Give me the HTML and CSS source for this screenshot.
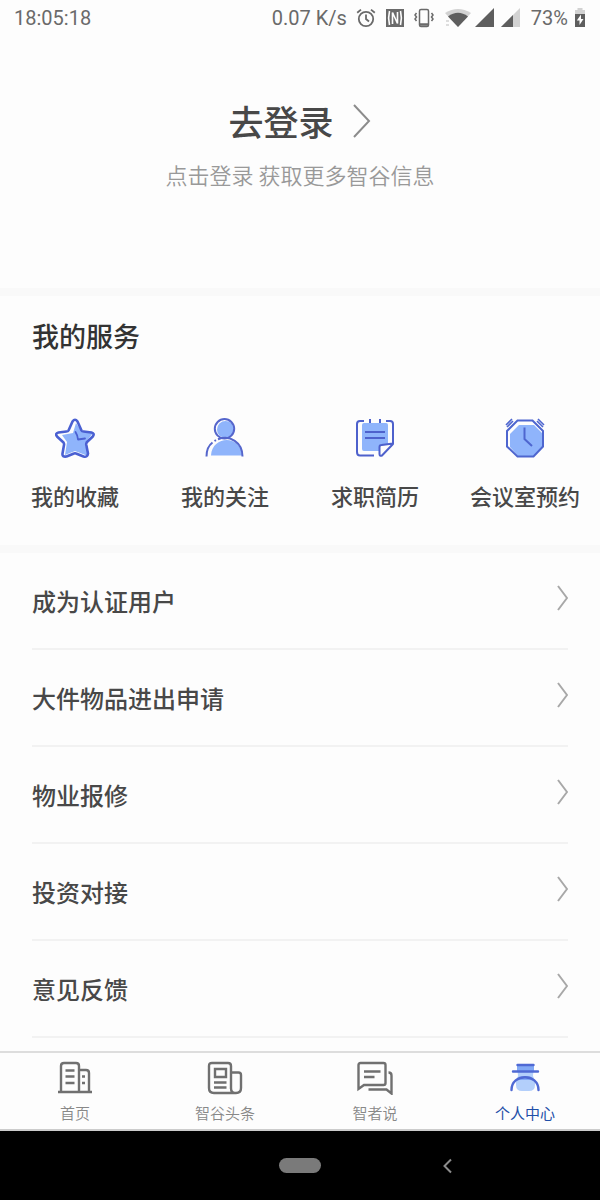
FILE: index.html
```
<!DOCTYPE html>
<html lang="zh-CN">
<head>
  <meta charset="UTF-8" />
  <meta name="viewport" content="width=device-width, initial-scale=1.0"/>
  <title>个人中心</title>
  <link rel="stylesheet" href="styles.css">
</head>
<body>
  <!-- Status bar -->
  <header class="status-bar">
    <span class="clock">18:05:18</span>
    <span class="speed">0.07 K/s</span>
    <div class="status-icons">
      <svg width="20" height="20" viewBox="0 0 20 20" fill="none" stroke="#6a6a6a" stroke-width="1.8">
        <circle cx="10" cy="11" r="7.2"/>
        <path d="M10 6.5V11l3 2.5M1.2 4.8L5 1.6M18.8 4.8L15 1.6"/>
      </svg>
      <svg width="20" height="20" viewBox="0 0 20 20">
        <path fill="#6a6a6a" d="M1 1h18v18H1z"/>
        <path fill="none" stroke="#fdfdfd" stroke-width="1.6" d="M4.5 17c-1-4-1-10 0-14M7.5 16V4.500l5 11V4M15.500 3c1 4 1 10 0 14"/>
      </svg>
      <svg width="20" height="20" viewBox="0 0 20 20" fill="none" stroke="#6a6a6a" stroke-width="1.5">
        <rect x="5.5" y="1.5" width="9" height="17" rx="1.5"/>
        <path d="M5.5 16.5h9" stroke-width="2.5"/>
        <path d="M2.5 5l-1.5 2 1.5 2-1.5 2 1.5 2M17.5 5l1.5 2-1.5 2 1.5 2-1.5 2"/>
      </svg>
      <svg class="wifi" width="26" height="20" viewBox="0 0 26 20">
        <path fill="#d2d2d2" d="M0 5Q13-3 26 5L13 19z"/>
        <path fill="#5e5e5e" d="M3 8.500Q13 1 23 8.500L13 19z"/>
        <path stroke="#d2d2d2" stroke-width="1.5" d="M1 13h3M1 17h3"/>
      </svg>
      <svg width="20" height="20" viewBox="0 0 20 20"><path fill="#5e5e5e" d="M0 19L19 0v19z"/></svg>
      <svg class="sim" width="20" height="20" viewBox="0 0 20 20">
        <path fill="#d2d2d2" d="M0 19L19 0v19z"/>
        <path fill="#5e5e5e" d="M0 19L12 7v12z"/>
      </svg>
    </div>
    <span class="percent">73%</span>
    <svg width="12" height="20" viewBox="0 0 12 20">
      <path fill="#d2d2d2" d="M3.5 0h5v2H11v6H1V2h2.5z"/>
      <path fill="#5e5e5e" d="M1 6h10v13H1z"/>
      <path fill="#fdfdfd" d="M7 6.5L2.8 12.5h2.700V17l4-6H7z"/>
    </svg>
  </header>

  <main>
    <section class="profile">
      <a class="login" href="#">
        去登录
        <svg width="20" height="36" viewBox="0 0 20 36" fill="none" stroke="#8c8c8c" stroke-width="2"><path d="M2 2l15 16L2 34"/></svg>
      </a>
      <p>点击登录 获取更多智谷信息</p>
    </section>

    <section class="services">
      <h2>我的服务</h2>
      <div class="service-grid">
        <a href="#">
          <svg width="40" height="40" viewBox="0 0 40 40" stroke-linejoin="round" stroke-linecap="round">
            <path fill="#8fb4fb" d="M21 5l6 9 11 1-8 10 3 13-13-5-10 4 2-13-5-7 11-2z"/>
            <path fill="none" stroke="#4a60d2" stroke-width="2.6" d="M17.5 3.5Q20 0 22.5 3.5L26.5 12.500Q27 13.500 28.500 13.500L36.500 14.500Q40 15.500 37.800 18.500L32 24Q31 25 31.300 27L33 35.500Q32.500 39.500 28.500 38.500L21 35.500Q20 35 19 35.500L11.500 38.500Q7 39.300 7.500 35.500L9 27Q9.300 25.500 8.500 24.500L2 18.500Q-.3 15.500 3.500 14.500L11.500 13.500Q13 13.500 13.500 12.500z"/>
            <path fill="none" stroke="#4a60d2" stroke-width="1.8" d="M20.500 14q2 3 2.500 7.500l7-1"/>
          </svg>
          我的收藏
        </a>
        <a href="#">
          <svg width="40" height="40" viewBox="0 0 40 40">
            <circle cx="20.5" cy="11.5" r="8.500" fill="#8fb4fb"/>
            <path fill="#8fb4fb" d="M6 37.500c1-20 30-21 31 0z"/>
            <g fill="none" stroke="#5566cc" stroke-width="2">
              <circle cx="19.5" cy="10.8" r="9.7"/>
              <path d="M1.500 38.500c0-6 2-11 6-14M9.500 23l1.500-.9M13 21.200c12-4.500 24.500 3 24.500 17.300"/>
            </g>
          </svg>
          我的关注
        </a>
        <a href="#">
          <svg width="40" height="40" viewBox="0 0 40 40">
            <path fill="#8fb4fb" d="M9 5h22q2 0 2 2v20l-8 1-1 5H9q-2 0-2-2V7q0-2 2-2z"/>
            <path fill="#fdfdfd" d="M25 38l1-10 12-2z"/>
            <g fill="none" stroke="#4e61cc" stroke-width="2" stroke-linejoin="round">
              <path d="M9 3H5Q2 3 2 6V34Q2 37.500 5 37.500H19M31 3h4Q38 3 38 6V26L27 37.500Q24.500 38.500 24.500 36V29Q24.500 27 26.500 27L38 25.500"/>
              <path d="M15 1v4M25 1v4M10 14h20M10 20h20"/>
            </g>
          </svg>
          求职简历
        </a>
        <a href="#">
          <svg width="40" height="40" viewBox="0 0 40 40">
            <path fill="#8fb4fb" d="M14 7h15l9 9v12l-9 10H13l-8-9V16z"/>
            <g fill="none" stroke="#4e66cf" stroke-width="2">
              <path d="M12.5 2.5h15L38 13v15.5L28.5 38.500H12.500L2 28.500V13z"/>
              <path d="M19.500 9.500V21l7.500 7"/>
              <path stroke-width="1.6" d="M1 7l6-6M2 9l6-6M39 7l-6-6M38 9l-6-6"/>
            </g>
          </svg>
          会议室预约
        </a>
      </div>
    </section>

    <nav class="menu">
      <a href="#">成为认证用户 <svg width="12" height="28" viewBox="0 0 12 28"><path d="M2 2l9 12-9 12"/></svg></a>
      <a href="#">大件物品进出申请 <svg width="12" height="28" viewBox="0 0 12 28"><path d="M2 2l9 12-9 12"/></svg></a>
      <a href="#">物业报修 <svg width="12" height="28" viewBox="0 0 12 28"><path d="M2 2l9 12-9 12"/></svg></a>
      <a href="#">投资对接 <svg width="12" height="28" viewBox="0 0 12 28"><path d="M2 2l9 12-9 12"/></svg></a>
      <a href="#">意见反馈 <svg width="12" height="28" viewBox="0 0 12 28"><path d="M2 2l9 12-9 12"/></svg></a>
    </nav>
  </main>

  <!-- Bottom tabs -->
  <nav class="tabs">
    <a href="#">
      <svg width="36" height="36" viewBox="0 0 36 36" fill="none" stroke="#707070" stroke-width="2.4">
        <path d="M1 33h34M4 33V7q0-3 3-3h12q3 0 3 3v26M22 11h7q3 0 3 3v19"/>
        <path d="M8.500 11.500h9M8.500 17.500h9M8.500 24h9M25 17.500h3M25 24h3"/>
      </svg>
      首页
    </a>
    <a href="#">
      <svg width="36" height="36" viewBox="0 0 36 36" fill="none" stroke="#707070" stroke-width="2.4">
        <path d="M24 30V7q0-3-3-3H5Q2 4 2 7v22q0 5 5 5h22q5 0 5-5V16q0-2.500-2.500-2.500H24V29q0 5 4 5"/>
        <path d="M8 10h11v8H8zM7 23.500h12.500M7 28.500h12.500"/>
      </svg>
      智谷头条
    </a>
    <a href="#">
      <svg width="36" height="36" viewBox="0 0 36 36" fill="none" stroke="#707070" stroke-width="2.4">
        <path d="M1.500 30V6q0-2 2-2h23q2 0 2 2v18q0 2-2 2H7z"/>
        <path d="M7 12.500h16.500M7 18h10.500M31.500 13.500q3 0 3 3v18l-5-4H11.500"/>
      </svg>
      智者说
    </a>
    <a class="active" href="#">
      <svg width="36" height="36" viewBox="0 0 36 36">
        <path fill="#b3cffb" d="M10 6h17l-1 11 2 5v4q0 6-6 6h-7q-6 0-6-6v-4l2-5z"/>
        <path fill="#82a9f5" d="M10 7h17v5H10zM11 19q7.500-4 15 0v2H11z"/>
        <path fill="none" stroke="#4f69d4" stroke-width="2.4" stroke-linecap="round" d="M10.500 6h16M6 12.500h25M4.500 31c0-17 27-17 27 0"/>
      </svg>
      个人中心
    </a>
  </nav>

  <!-- System navigation -->
  <footer class="system-nav">
    <button class="home" aria-label="主屏幕"></button>
    <button class="back" aria-label="返回">
      <svg width="12" height="16" viewBox="0 0 12 16" fill="none" stroke="#8c8c8c" stroke-width="2"><path d="M9 1.5L2.5 8 9 14.5"/></svg>
    </button>
  </footer>
</body>
</html>
```
FILE: styles.css
```
* {
  box-sizing: border-box;
}

body {
  display: flex;
  flex-direction: column;
  min-height: 100vh;
  margin: 0;
  background: #fdfdfd;
  color: #484848;
  font-family: "Noto Sans CJK SC", sans-serif;
}

a {
  color: inherit;
  text-decoration: none;
}

svg {
  display: block;
  flex-shrink: 0;
}

/* Status bar */
.status-bar {
  display: flex;
  align-items: center;
  height: 36px;
  padding: 0 14px;
  color: #6a6a6a;
  font-family: Roboto, sans-serif;
  font-size: 20px;
}

.speed {
  margin-left: auto;
}

.status-icons {
  display: flex;
  gap: 9px;
  margin: 0 10px 0 9px;
}

.wifi {
  margin: 0 -5px 0 2px;
}

.sim {
  margin-left: -3px;
}

.percent {
  margin-right: 6px;
}

/* Login block */
.profile {
  display: flex;
  flex-direction: column;
  align-items: center;
  height: 252px;
  padding-top: 60px;
}

.login {
  display: flex;
  align-items: center;
  gap: 18px;
  font-size: 35px;
  font-weight: 500;
  line-height: 50px;
}

.profile p {
  margin: 12px 0 0;
  color: #999;
  font-size: 22px;
  font-weight: 350;
  line-height: 32px;
}

/* Services */
.services {
  padding: 20px 0 34px;
  border-top: 8px solid #f9f9f9;
  border-bottom: 8px solid #f9f9f9;
}

.services h2 {
  margin: 0 32px;
  color: #333;
  font-size: 27px;
  font-weight: 500;
  line-height: 40px;
}

.service-grid {
  display: grid;
  grid-template-columns: repeat(4, 1fr);
  margin-top: 62px;
}

.service-grid a {
  display: flex;
  flex-direction: column;
  align-items: center;
  gap: 21px;
  font-size: 22px;
  font-weight: 500;
  line-height: 32px;
}

/* Menu rows */
.menu {
  padding: 0 32px;
}

.menu a {
  display: flex;
  align-items: center;
  justify-content: space-between;
  height: 97px;
  border-bottom: 2px solid #f2f2f2;
  font-size: 24px;
  font-weight: 500;
}

.menu svg {
  margin-bottom: 6px;
  fill: none;
  stroke: #a8a8a8;
  stroke-width: 2;
}

/* Bottom tabs */
.tabs {
  display: grid;
  grid-template-columns: repeat(4, 1fr);
  margin-top: auto;
  border-top: 2px solid #ddd;
  border-bottom: 2px solid #ccc;
}

.tabs a {
  display: flex;
  flex-direction: column;
  align-items: center;
  gap: 6px;
  padding: 6px 0 4px;
  color: #888;
  font-size: 15px;
  font-weight: 350;
  line-height: 24px;
}

.tabs .active {
  color: #1f4fa8;
  font-weight: 400;
}

/* System navigation */
.system-nav {
  display: grid;
  grid-template-columns: repeat(4, 1fr);
  align-items: center;
  height: 69px;
  background: #000;
}

.system-nav button {
  padding: 0;
  border: 0;
  background: none;
}

.system-nav .home {
  grid-column: 2 / 4;
  justify-self: center;
  width: 42px;
  height: 15px;
  border-radius: 8px;
  background: #7a7a7a;
}

.system-nav .back {
  justify-self: start;
  padding: 8px;
  margin-left: -16px;
}
```
